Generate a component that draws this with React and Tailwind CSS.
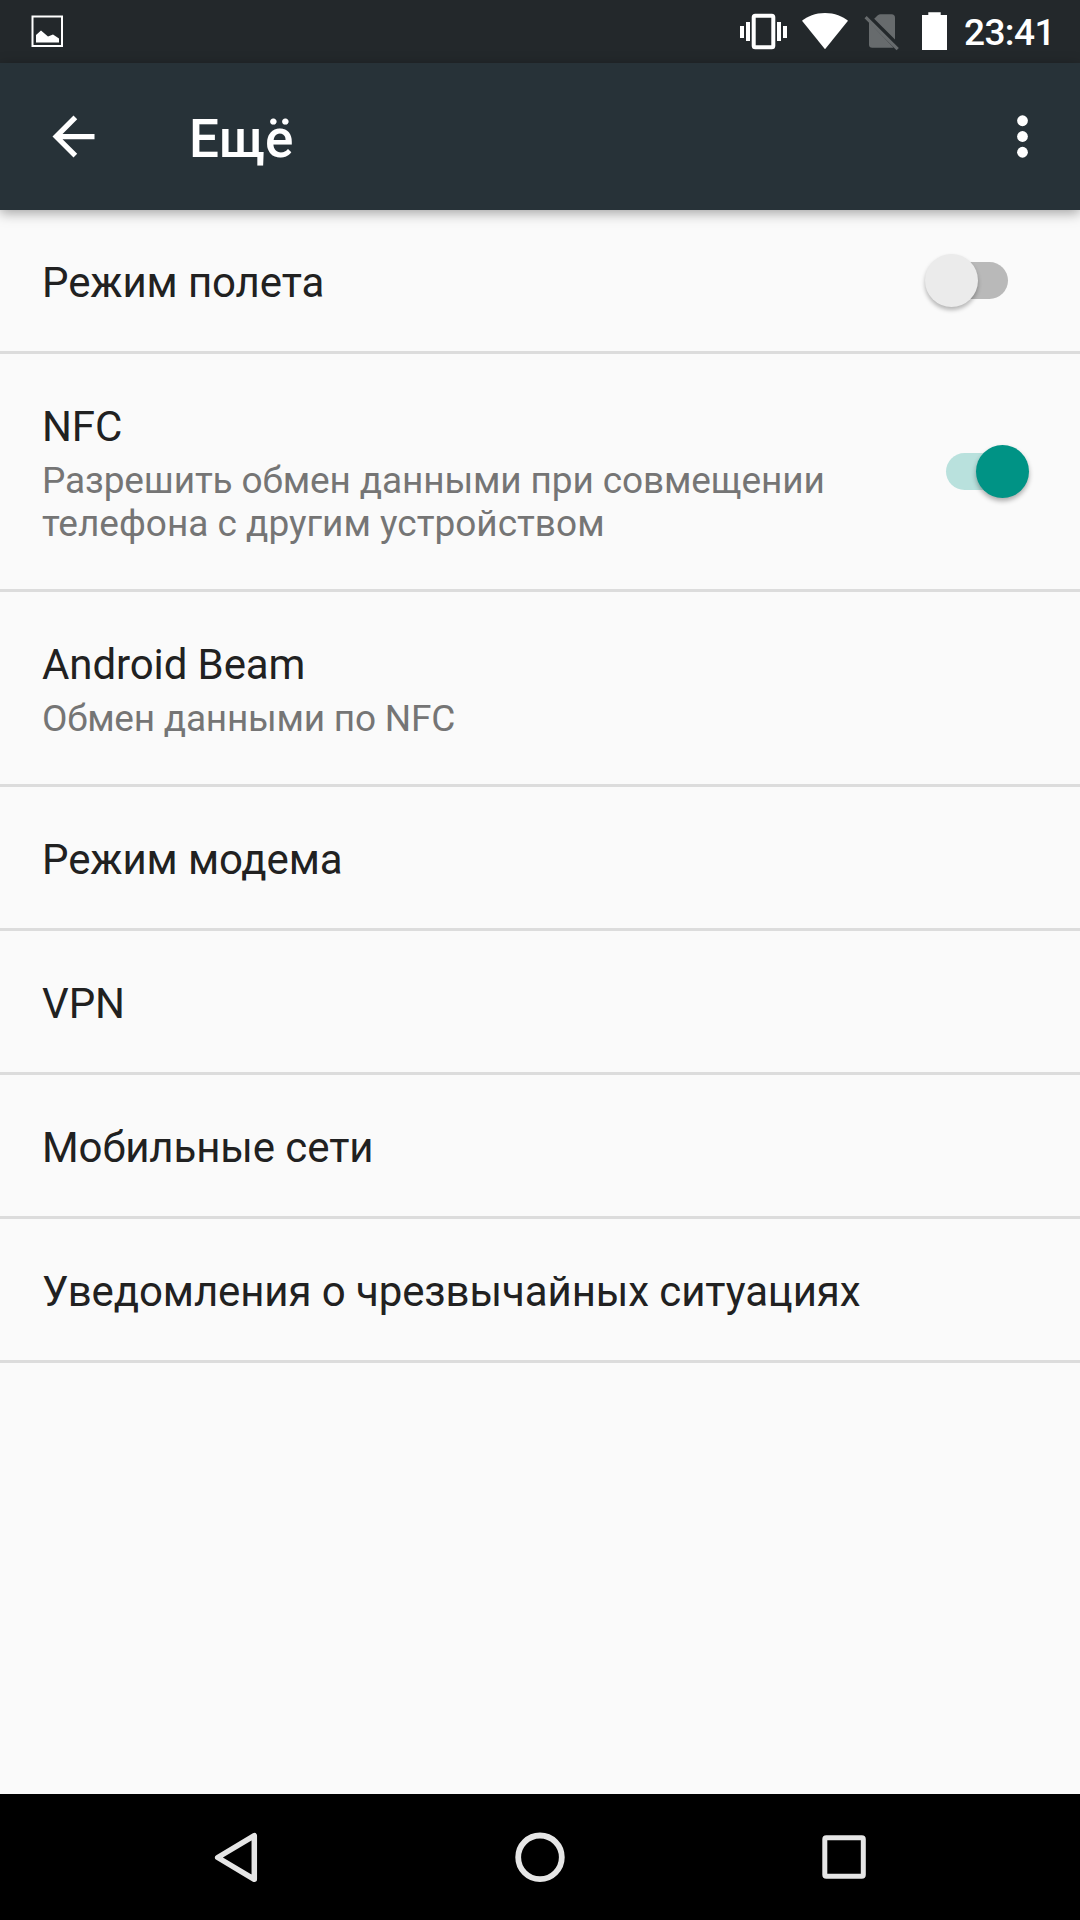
import React, { useState } from 'react';

const initialItems = [
    { id: 'airplane', title: 'Режим полета', toggle: true, checked: false },
    {
        id: 'nfc',
        title: 'NFC',
        summary: ['Разрешить обмен данными при совмещении', 'телефона с другим устройством'],
        summaryTracking: ['tracking-[-0.12px]', 'tracking-normal'],
        toggle: true,
        checked: true
    },
    {
        id: 'beam',
        title: 'Android Beam',
        summary: ['Обмен данными по NFC'],
        summaryTracking: ['tracking-[-0.23px]']
    },
    { id: 'tethering', title: 'Режим модема' },
    { id: 'vpn', title: 'VPN' },
    { id: 'mobile', title: 'Мобильные сети' },
    { id: 'alerts', title: 'Уведомления о чрезвычайных ситуациях' }
];

const StatusBar = () => (
    <div className="flex h-[63px] items-center bg-[#23282b] pl-[31px] pr-[25px] text-white">
        <svg className="h-[33px] w-[33px]" viewBox="0 0 33 33" fill="currentColor">
            <rect x="1.5" y="1.5" width="29.5" height="29.5" fill="none" stroke="currentColor" strokeWidth="2" />
            <path d="M5 27.5V20l5-4.5L17 21.5l5-2 6 4v4z" />
        </svg>

        <div className="ml-auto flex items-center">
            {/* vibrate */}
            <svg className="h-[63px] w-[48px]" viewBox="0 0 48 63" fill="currentColor">
                <rect x="0" y="26" width="4" height="12" />
                <rect x="6" y="22" width="4" height="19" />
                <rect x="13.7" y="15.8" width="19.6" height="31.5" rx="1.5" fill="none" stroke="currentColor" strokeWidth="4" />
                <rect x="37" y="22" width="4" height="19" />
                <rect x="43" y="26" width="4" height="12" />
            </svg>
            {/* wifi */}
            <svg className="ml-[14px] h-[63px] w-[46px]" viewBox="0 0 46 63" fill="currentColor">
                <path d="M23 49.2L0 20.7C5 16.5 13.5 13 23 13s18 3.5 23 7.7z" />
            </svg>
            {/* no sim */}
            <svg className="ml-[16px] h-[63px] w-[36px]" viewBox="0 0 36 63" fill="#676b6d">
                <path d="M10.2 18.8L13.8 15.2Q15 14.3 16.5 14.3H27.5Q31 14.3 31 17.8V39.5z" />
                <path d="M5 22V44.5Q5 47.700 8.2 47.700H28Q29 47.700 29.5 47.4z" />
                <path d="M0.5 18.2L2.7 16L34.8 48L32.6 50.2z" />
            </svg>
            {/* battery */}
            <svg className="ml-[22px] h-[63px] w-[25px]" viewBox="0 0 25 63" fill="currentColor">
                <path d="M6.3 12.2H18.7V15H25V50H0V15H6.3z" />
            </svg>
            <span className="ml-[17px] w-[91px] pt-[3px] text-[37px] leading-[44px] font-medium tracking-[-0.6px] whitespace-nowrap">
                23:41
            </span>
        </div>
    </div>
);

const AppBar = ({ title }) => (
    <header className="relative flex h-[147px] items-center bg-[#273238] pr-[26px] pl-[42px] text-white shadow-[0_3px_12px_rgba(0,0,0,0.36)]">
        <button className="h-[63px] w-[63px]">
            <svg className="h-full w-full" viewBox="0 0 24 24" fill="currentColor">
                <path d="M20 11H7.83l5.59-5.59L12 4l-8 8 8 8 1.41-1.41L7.83 13H20v-2z" />
            </svg>
        </button>
        <h1 className="ml-[84px] flex-1 pt-[5px] text-[53px] leading-[62px] font-medium">{title}</h1>
        <button className="h-[63px] w-[63px]">
            <svg className="h-full w-full" viewBox="0 0 24 24" fill="currentColor">
                <circle cx="12" cy="6" r="2.05" />
                <circle cx="12" cy="12" r="2.05" />
                <circle cx="12" cy="18" r="2.05" />
            </svg>
        </button>
    </header>
);

const Switch = ({ checked, onChange }) => (
    <button
        role="switch"
        aria-checked={checked}
        onClick={onChange}
        className={`flex w-[83px] shrink-0 items-center ${checked ? 'mr-[51px]' : 'mr-[72px]'}`}
    >
        {checked ? (
            <>
                <span className="h-[37px] w-[57px] rounded-l-full bg-[#b9e1dd]" />
                <span className="-ml-[27px] h-[53px] w-[53px] shrink-0 rounded-full bg-[#009385] shadow-[0_3px_5px_rgba(0,0,0,0.32)]" />
            </>
        ) : (
            <>
                <span className="z-10 h-[53px] w-[53px] shrink-0 rounded-full bg-[#ebebeb] shadow-[0_3px_4px_rgba(0,0,0,0.28)]" />
                <span className="-ml-[27px] h-[37px] w-[57px] rounded-r-full bg-[#b9b9b9]" />
            </>
        )}
    </button>
);

const SettingRow = ({ item, onToggle }) => (
    <li className="flex items-center border-b-[3px] border-[#dcdcdc] pl-[42px]">
        <div className={`flex-1 pt-[44px] ${item.summary ? 'pb-[44px]' : 'pb-[40px]'}`}>
            <div className="text-[42px] leading-[57px] tracking-[-0.1px] text-[#212121]">{item.title}</div>
            {item.summary && (
                <div className="mt-[4px] text-[37px] leading-[43px] whitespace-nowrap text-[#757575]">
                    {item.summary.map((line, i) => (
                        <p key={line} className={item.summaryTracking[i]}>
                            {line}
                        </p>
                    ))}
                </div>
            )}
        </div>
        {item.toggle && <Switch checked={item.checked} onChange={() => onToggle(item.id)} />}
    </li>
);

const NavBar = () => (
    <nav className="flex h-[126px] items-center justify-between bg-black px-[205px] text-[#e6e6e6]">
        <svg className="h-[63px] w-[63px]" viewBox="0 0 63 63" fill="none" stroke="currentColor" strokeWidth="5.5" strokeLinejoin="round">
            <path d="M12.7 31.5L49.3 9.7V53.3z" />
        </svg>
        <svg className="h-[63px] w-[63px]" viewBox="0 0 63 63" fill="none" stroke="currentColor" strokeWidth="5.8">
            <circle cx="31" cy="31.3" r="21.8" />
        </svg>
        <svg className="h-[63px] w-[63px]" viewBox="0 0 63 63" fill="none" stroke="currentColor" strokeWidth="5">
            <rect x="12.8" y="11.8" width="38.5" height="38.5" rx="1.5" />
        </svg>
    </nav>
);

const App = () => {
    const [items, setItems] = useState(initialItems);

    const handleToggle = (id) => {
        setItems(items.map((item) => (item.id === id ? { ...item, checked: !item.checked } : item)));
    };

    return (
        <div className="flex h-[1920px] w-[1080px] flex-col overflow-hidden bg-[#fafafa] font-[Roboto,sans-serif]">
            <StatusBar />
            <AppBar title="Ещё" />
            <ul className="flex-1">
                {items.map((item) => (
                    <SettingRow key={item.id} item={item} onToggle={handleToggle} />
                ))}
            </ul>
            <NavBar />
        </div>
    );
};

export default App;
